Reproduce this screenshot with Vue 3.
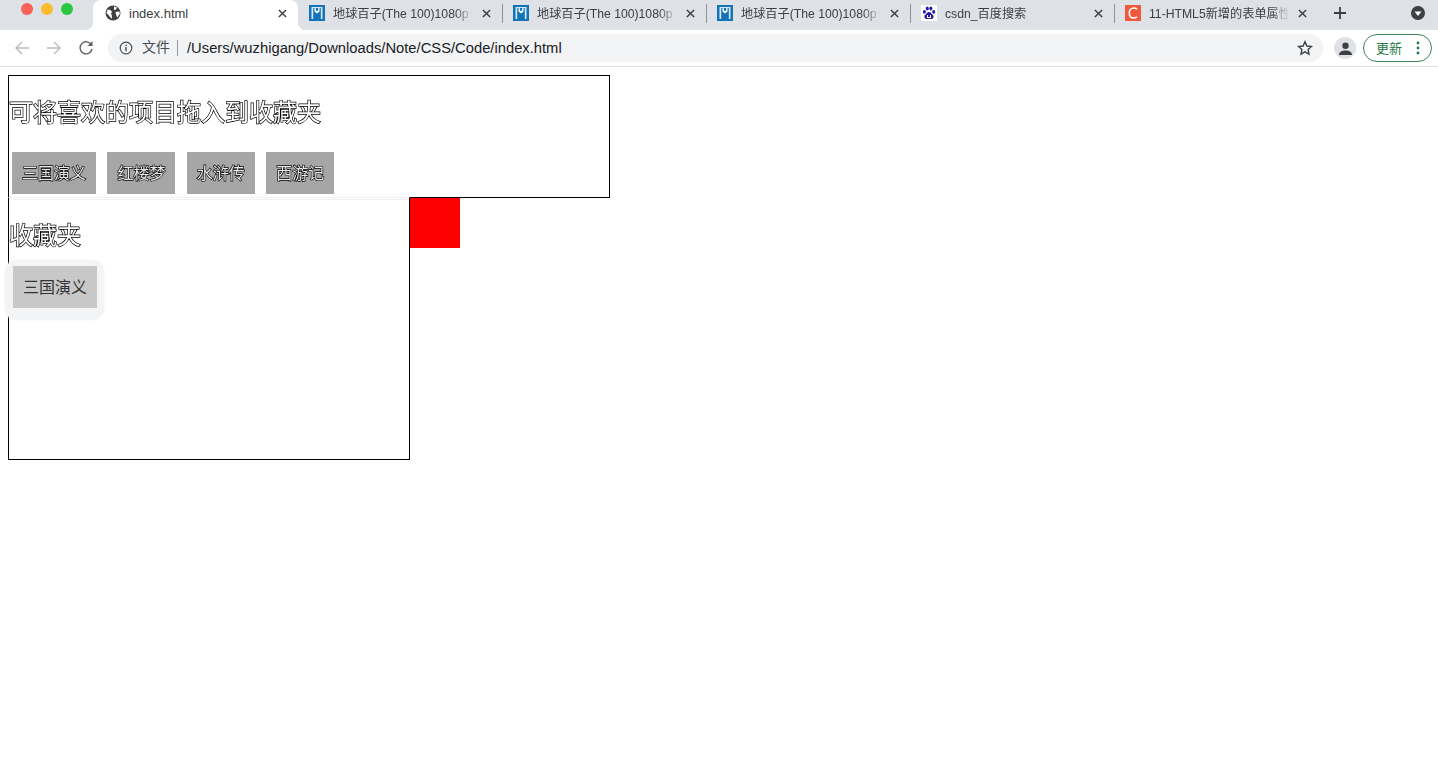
<template>
  <div class="window">
    <div class="tabstrip">
      <div class="traffic">
        <i class="dot red"></i>
        <i class="dot yellow"></i>
        <i class="dot green"></i>
      </div>

      <div class="tab active">
        <svg class="fav" viewBox="0 0 16 16">
          <circle cx="8" cy="8" r="7.500" fill="#3c4043" />
          <path d="M2.500 4.500l3 .5 1.500 2-1 1.500 1 2.500-.5 3L4 10.500 1.500 8zM9 1.500l3 1-1 2-2 .5zM10.500 7l4-.5.300 2.500-2.600 3.500-1-2.500z" fill="#fff" />
        </svg>
        <span class="title">index.html</span>
        <svg class="close" viewBox="0 0 10 10"><path d="M1 1l8 8M9 1l-8 8" /></svg>
      </div>

      <div v-for="tab in tabs" :key="tab.id" class="tab">
        <svg v-if="tab.icon === 'm'" class="fav" viewBox="0 0 16 16">
          <rect width="16" height="16" fill="#1273b8" />
          <path d="M2.500 2h1.700v12H2.500zM11.800 2h1.700v12h-1.700zM4.200 2h7.600v1H4.200z" fill="#d5ebf8" />
          <path d="M5.500 3h1.300v2l1.200 1.500L9.200 5V3h1.300v3.500L8 8.500 5.500 6.500z" fill="#fff" />
        </svg>
        <svg v-else-if="tab.icon === 'paw'" class="fav" viewBox="0 0 16 16">
          <rect width="16" height="16" fill="#fff" />
          <g fill="#2319a8">
            <ellipse cx="3.400" cy="6.800" rx="1.500" ry="1.900" />
            <ellipse cx="6.300" cy="3.500" rx="1.500" ry="2" />
            <ellipse cx="9.900" cy="3.500" rx="1.500" ry="2" />
            <ellipse cx="12.700" cy="6.800" rx="1.500" ry="1.900" />
            <path d="M8 7c2 0 2.300 1.800 3.700 2.800 1.500 1.100 1 4.200-1.400 4.200-1 0-1.400-.3-2.300-.3s-1.300.3-2.300.3C3.300 14 2.800 10.900 4.300 9.800 5.700 8.800 6 7 8 7z" />
          </g>
          <path d="M6 10h1v2h2v-2h1v3H6z" fill="#fff" />
        </svg>
        <svg v-else class="fav" viewBox="0 0 16 16">
          <rect width="16" height="16" fill="#ef5a3c" />
          <path d="M12 4.200C11 3.300 10 3 8.800 3 6 3 4.300 5 4.300 8s1.700 5 4.500 5c1.200 0 2.200-.3 3.200-1.200" fill="none" stroke="#fff" stroke-width="1.600" />
        </svg>
        <span class="title">{{ tab.title }}</span>
        <svg class="close" viewBox="0 0 10 10"><path d="M1 1l8 8M9 1l-8 8" /></svg>
      </div>

      <svg class="plus" viewBox="0 0 12 12"><path d="M6 0v12M0 6h12" /></svg>
      <svg class="menu-down" viewBox="0 0 14 14">
        <circle cx="7" cy="7" r="7" fill="#3c4043" />
        <path d="M3.500 5.500h7L7 10z" fill="#fff" />
      </svg>
    </div>

    <div class="toolbar">
      <svg class="nav" viewBox="0 0 16 16"><path d="M15 8H2M8 2L2 8l6 6" stroke="#b9bbbe" /></svg>
      <svg class="nav" viewBox="0 0 16 16"><path d="M1 8h13M8 2l6 6-6 6" stroke="#b9bbbe" /></svg>
      <svg class="nav" viewBox="0 0 16 16">
        <path d="M13.500 5.200A6 6 0 1 0 14 9" stroke="#5f6368" />
        <path d="M14.500 1v5h-5z" fill="#5f6368" />
      </svg>
      <div class="omnibox">
        <svg class="info" viewBox="0 0 14 14">
          <circle cx="7" cy="7" r="5.800" fill="none" stroke="#4a4d51" stroke-width="1.200" />
          <path d="M6.300 6h1.400v4.200H6.300zM6.300 3.700h1.400v1.400H6.300z" fill="#4a4d51" />
        </svg>
        <span class="scheme">文件</span>
        <i class="sep"></i>
        <span class="url">/Users/wuzhigang/Downloads/Note/CSS/Code/index.html</span>
        <svg class="star" viewBox="0 0 16 16">
          <path d="M8 1.800l1.900 4.200 4.600.5-3.400 3.100.9 4.500L8 11.800l-4 2.300.9-4.500-3.400-3.100 4.600-.5z" />
        </svg>
      </div>
      <div class="avatar">
        <svg viewBox="0 0 16 16">
          <circle cx="8" cy="5" r="3.400" fill="#3c4043" />
          <path d="M1 15c0-3.500 3.500-5 7-5s7 1.500 7 5z" fill="#3c4043" />
        </svg>
      </div>
      <div class="update">
        <span>更新</span>
        <svg viewBox="0 0 4 14">
          <circle cx="2" cy="2" r="1.400" />
          <circle cx="2" cy="7" r="1.400" />
          <circle cx="2" cy="12" r="1.400" />
        </svg>
      </div>
    </div>

    <div class="page">
      <section class="source">
        <h2>可将喜欢的项目拖入到收藏夹</h2>
        <div class="books">
          <div v-for="book in books" :key="book" class="book"><span>{{ book }}</span></div>
        </div>
      </section>

      <div class="lower">
        <section class="favorites">
          <i class="seam"></i>
          <h2>收藏夹</h2>
          <div class="halo">
            <div class="ghost">三国演义</div>
          </div>
        </section>
        <div class="square"></div>
      </div>
    </div>
  </div>
</template>

<script setup>
const tabs = [
  { id: 1, icon: 'm', title: '地球百子(The 100)1080p' },
  { id: 2, icon: 'm', title: '地球百子(The 100)1080p' },
  { id: 3, icon: 'm', title: '地球百子(The 100)1080p' },
  { id: 4, icon: 'paw', title: 'csdn_百度搜索' },
  { id: 5, icon: 'c', title: '11-HTML5新增的表单属性' }
]

const books = ['三国演义', '红楼梦', '水浒传', '西游记']
</script>

<style>
html,
body {
  background: #fff;
}
</style>

<style scoped>
.window {
  height: 758px;
  overflow: hidden;
  font-family: "Liberation Sans", "Noto Sans CJK SC", sans-serif;
  color: #000;
}

.tabstrip {
  display: flex;
  align-items: center;
  height: 30px;
  background: #dee1e6;
  position: relative;
}

.traffic {
  display: flex;
  gap: 8px;
  width: 93px;
  flex: none;
  padding: 0 0 12px 21px;
  box-sizing: border-box;
}

.dot {
  width: 12px;
  height: 12px;
  border-radius: 50%;
}

.red { background: #f8605a; }
.yellow { background: #fcbc2e; }
.green { background: #29c840; }

.tab {
  display: flex;
  align-items: center;
  width: 204px;
  height: 30px;
  flex: none;
  box-sizing: border-box;
  padding: 0 11px 4px;
  position: relative;
  font-size: 12.200px;
  color: #3c4043;
}

.tab + .tab::before {
  content: "";
  position: absolute;
  left: 0;
  top: 4px;
  height: 19px;
  width: 1px;
  background: #8f9296;
}

.tab.active {
  background: #fff;
  border-radius: 8px 8px 0 0;
  width: 205px;
  color: #3a3c3f;
  padding-left: 12px;
  font-size: 13px;
}

.tab.active::before,
.tab.active::after {
  content: "";
  position: absolute;
  bottom: 0;
  width: 8px;
  height: 8px;
}

.tab.active::before {
  left: -8px;
  background: radial-gradient(circle at 0 0, #dee1e6 8px, #fff 8.500px);
}

.tab.active::after {
  right: -8px;
  background: radial-gradient(circle at 100% 0, #dee1e6 8px, #fff 8.500px);
}

.tab.active + .tab::before {
  display: none;
}

.fav {
  width: 16px;
  height: 16px;
  flex: none;
  margin-right: 8px;
}

.title {
  flex: 1;
  min-width: 0;
  white-space: nowrap;
}

.tab:nth-child(n + 3) .title {
  -webkit-mask-image: linear-gradient(to right, #000 122px, transparent 140px);
  mask-image: linear-gradient(to right, #000 122px, transparent 140px);
}

.close {
  width: 9px;
  height: 9px;
  flex: none;
  stroke: #3c4043;
  stroke-width: 1.600;
  fill: none;
}

.plus {
  width: 12px;
  height: 12px;
  margin: 0 0 4px 16px;
  flex: none;
  stroke: #3c4043;
  stroke-width: 1.800;
}

.menu-down {
  width: 14px;
  height: 14px;
  margin: 0 13px 4px auto;
  flex: none;
}

.toolbar {
  display: flex;
  align-items: center;
  height: 36px;
  padding: 0 6px 0 14px;
  border-bottom: 1px solid #dfe1e5;
  background: #fff;
}

.nav {
  width: 16px;
  height: 16px;
  flex: none;
  margin-right: 16px;
  fill: none;
  stroke-width: 1.400;
}

.nav path[fill] {
  stroke: none;
}

.omnibox {
  display: flex;
  align-items: center;
  flex: 1;
  height: 28px;
  margin-left: -2px;
  padding: 0 10px 0 11px;
  border-radius: 14px;
  background: #f1f3f4;
  font-size: 14px;
}

.info {
  width: 14px;
  height: 14px;
  flex: none;
  margin-right: 9px;
}

.scheme {
  color: #4a4d51;
  line-height: 28px;
  height: 28px;
  margin-top: -2px;
}

.sep {
  width: 1px;
  height: 16px;
  margin: 0 9px 0 7px;
  background: #9a9da1;
}

.url {
  flex: 1;
  font-size: 14.750px;
  color: #202124;
}

.star {
  width: 16px;
  height: 16px;
  flex: none;
  fill: none;
  stroke: #3c4043;
  stroke-width: 1.400;
}

.avatar {
  display: flex;
  align-items: center;
  justify-content: center;
  width: 22px;
  height: 22px;
  margin-left: 11px;
  border-radius: 50%;
  background: #dfe1e5;
  flex: none;
}

.avatar svg {
  width: 15px;
  height: 15px;
}

.update {
  display: flex;
  align-items: center;
  box-sizing: border-box;
  width: 69px;
  height: 28px;
  margin-left: 7px;
  padding: 0 11px 0 12px;
  border: 1px solid #3d8358;
  border-radius: 14px;
  font-size: 13px;
  color: #1e7a45;
  flex: none;
}

.update span {
  flex: 1;
  margin-bottom: 2px;
}

.update svg {
  width: 4px;
  height: 14px;
  fill: #1e7a45;
}

.page {
  padding: 8px;
}

.source {
  box-sizing: border-box;
  width: 602px;
  height: 123px;
  border: 1px solid #000;
}

h2 {
  margin: 0;
  font-size: 24px;
  font-weight: 400;
  line-height: 34px;
  color: #fff;
  -webkit-text-stroke: 1.400px #000;
  paint-order: stroke fill;
  will-change: opacity;
}

.source h2 {
  margin-top: 20px;
}

.books {
  display: flex;
  gap: 11.400px;
  margin: 22px 0 0 3px;
}

.book {
  height: 42px;
  padding: 0 10px;
  line-height: 44px;
  font-size: 16px;
  background: #a6a6a6;
}

.book span {
  display: block;
  color: #e8e8e8;
  -webkit-text-stroke: 1.300px #000;
  paint-order: stroke fill;
  will-change: opacity;
}

.lower {
  display: flex;
  align-items: flex-start;
  margin-top: -1px;
}

.favorites {
  box-sizing: border-box;
  width: 402px;
  height: 263px;
  border: 1px solid #000;
  border-top-color: #f0f0f0;
  background: #fff;
  position: relative;
}

.seam {
  display: block;
  height: 1px;
  margin-top: 1px;
  background: #f0f0f0;
}

.favorites h2 {
  margin-top: 19px;
}

/* the drag image, floats over the drop box */
.halo {
  position: absolute;
  left: -4px;
  top: 62px;
  padding: 6px 7px 12px 8px;
  border-radius: 12px;
  background: #f3f4f5;
  box-shadow: 0 0 3px #f3f4f5;
}

.ghost {
  height: 42px;
  padding: 0 10px;
  line-height: 44px;
  font-size: 16px;
  background: #c8c8c8;
  color: #333;
}

.square {
  width: 50px;
  height: 50px;
  margin-top: 1px;
  background: #f00;
}
</style>
